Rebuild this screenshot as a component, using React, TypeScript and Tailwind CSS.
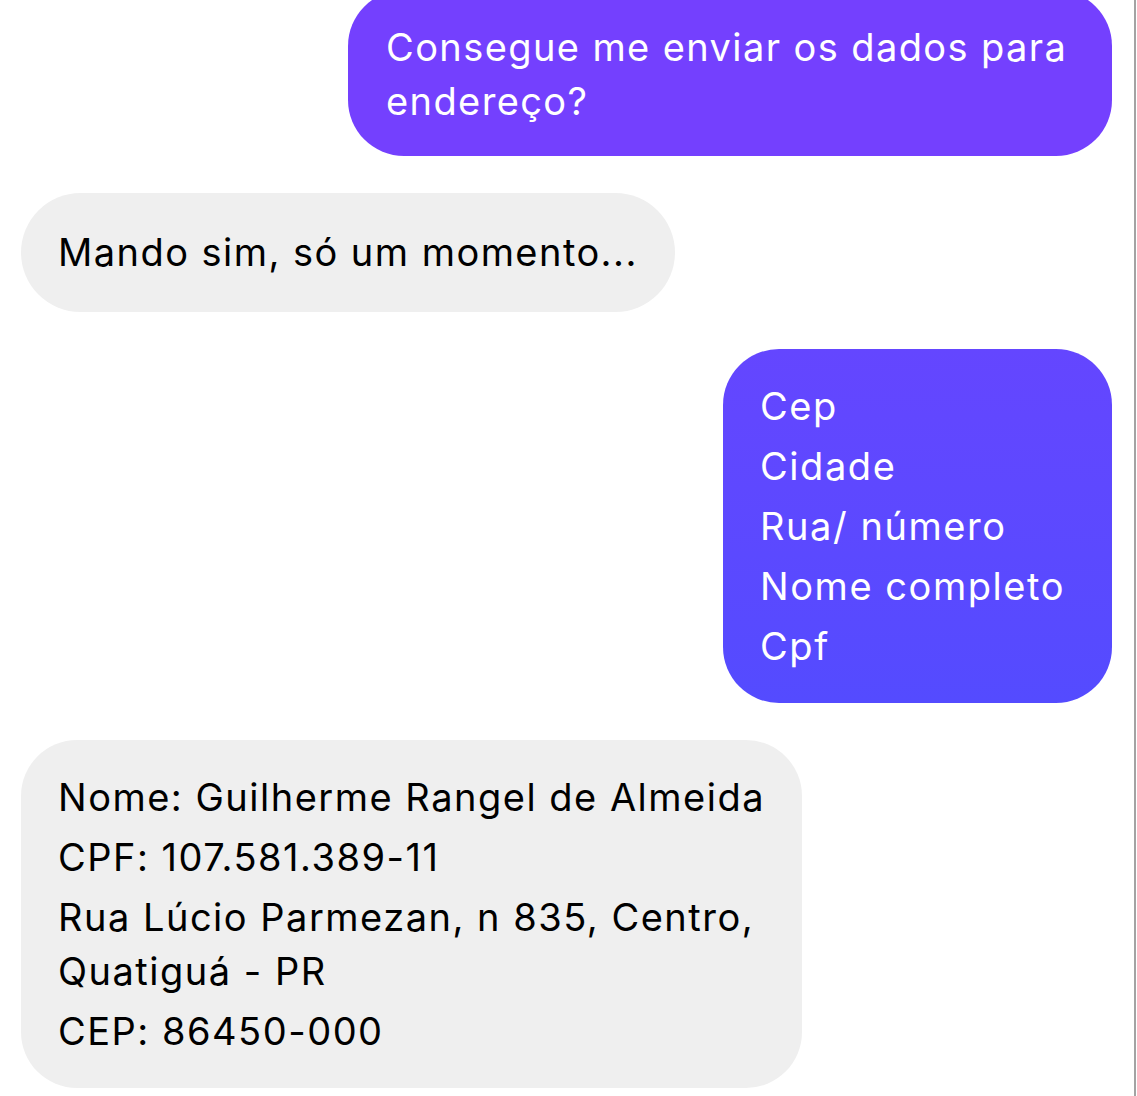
import React from 'react';

const font = { fontFamily: 'Inter, "Noto Sans", sans-serif' };

function Sent({ lines, className = '' }: { lines: string[]; className?: string }) {
  return (
    <div className={`self-end rounded-[56px] px-[38px] text-white text-[38px] leading-[54px] tracking-[1.4px] ${className}`}>
      {lines.map((l, i) => (
        <div key={i}>{l}</div>
      ))}
    </div>
  );
}

export default function App() {
  return (
    <div className="flex w-[1137px] h-[1096px] bg-white overflow-hidden" style={font}>
      <div className="flex flex-col w-[1134px] pl-[21px] pr-[22px] gap-[37px]">
        <Sent
          className="-mt-[10px] w-[764px] pt-[30px] pb-[28px] bg-[#7440FE]"
          lines={['Consegue me enviar os dados para', 'endereço?']}
        />

        <div className="self-start w-fit rounded-[60px] bg-[#EFEFEF] px-[37px] py-[32px] text-black text-[38px] leading-[55px] tracking-[1.45px]">
          Mando sim, só um momento...
        </div>

        <div className="self-end w-fit rounded-[56px] pl-[37px] pr-[47px] py-[30px] text-white text-[38px] leading-[54px] tracking-[1.55px] flex flex-col gap-[6px] bg-gradient-to-b from-[#6446FF] to-[#544BFF]">
          <div>Cep</div>
          <div>Cidade</div>
          <div>Rua/ número</div>
          <div>Nome completo</div>
          <div>Cpf</div>
        </div>

        <div className="self-start w-fit rounded-[56px] bg-[#EFEFEF] px-[37px] py-[30px] text-black text-[38px] leading-[54px] tracking-[1.5px] flex flex-col gap-[6px]">
          <div>Nome: Guilherme Rangel de Almeida</div>
          <div>CPF: 107.581.389-11</div>
          <div>
            Rua Lúcio Parmezan, n 835, Centro,
            <br />
            Quatiguá - PR
          </div>
          <div>CEP: 86450-000</div>
        </div>
      </div>
      <div className="w-[2px] h-full bg-[#a3a3a3]" />
      <div className="flex-1" />
    </div>
  );
}
